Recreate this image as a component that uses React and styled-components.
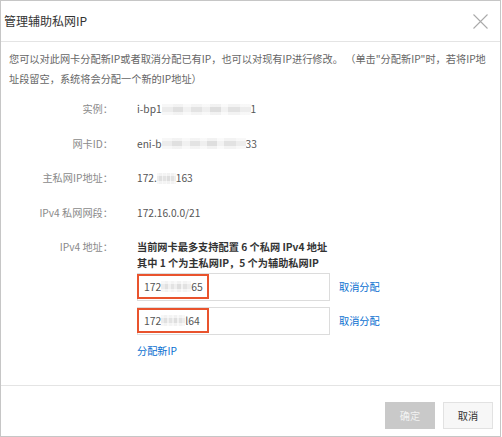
import React from 'react';
import styled, { createGlobalStyle } from 'styled-components';

const Global = createGlobalStyle`
  html, body { margin: 0; padding: 0; background: #fff; }
  body { font-family: "Noto Sans CJK SC", "Noto Sans", sans-serif; }
  * { box-sizing: border-box; }
`;

const Dialog = styled.div`
  width: 501px;
  height: 437px;
  border: 1px solid #c6c6c6;
  display: flex;
  flex-direction: column;
  background: #fff;
`;

const Header = styled.div`
  height: 41px;
  flex: none;
  border-bottom: 1px solid #e4e4e4;
  display: flex;
  align-items: center;
  justify-content: space-between;
  padding: 0 12px 0 3px;
`;

const Title = styled.h1`
  margin: 0;
  font-size: 12px;
  font-weight: normal;
  color: #333;
  line-height: 20px;
`;

const Close = styled.button`
  border: 0;
  background: none;
  padding: 0;
  width: 15px;
  height: 15px;
  display: flex;
  cursor: pointer;
`;

const Body = styled.div`
  flex: 1;
  padding: 7px 10px 0 8px;
  font-size: 10.2px;
`;

const Desc = styled.p`
  margin: 0;
  line-height: 20px;
  color: #666;
`;

const Form = styled.div`
  display: flex;
  flex-direction: column;
  gap: 14.5px;
  margin-top: 10px;
`;

const Row = styled.div`
  display: flex;
  align-items: flex-start;
  line-height: ${p => p.$lh || 20}px;
  margin-top: ${p => p.$mt || 0}px;
`;

const Label = styled.div`
  width: 104px;
  flex: none;
  text-align: right;
  color: #8a8a8a;
  margin-right: 24px;
`;

const Value = styled.div`
  color: #555;
  display: flex;
  align-items: center;
`;

const Stack = styled.div`
  display: flex;
  flex-direction: column;
`;

const Note = styled.div`
  font-weight: bold;
  color: #333;
  line-height: 16px;
`;

const IpList = styled.div`
  display: flex;
  flex-direction: column;
  gap: 6px;
  margin-top: 2px;
`;

const IpRow = styled.div`
  display: flex;
  align-items: center;
  gap: 9px;
`;

const IpInput = styled.div`
  position: relative;
  width: 193px;
  height: 28px;
  border: 1px solid #dcdcdc;
  padding-left: 6px;
  display: flex;
  align-items: center;
  color: #555;
  font-size: 10.4px;
`;

const Mark = styled.span`
  position: absolute;
  left: -1px;
  top: 0;
  width: 72px;
  height: 25px;
  border: 2px solid #e9532d;
`;

const Link = styled.a`
  color: #0a6fd0;
  text-decoration: none;
  cursor: pointer;
  line-height: 20px;
`;

const Smudge = styled.span`
  display: inline-block;
  width: ${p => p.$w}px;
  height: 11px;
  background:
    linear-gradient(180deg, rgba(255,255,255,0.6) 0 25%, rgba(255,255,255,0) 25% 75%, rgba(255,255,255,0.6) 75% 100%),
    linear-gradient(90deg, #ececec 0 12%, #e0e0e0 12% 24%, #f1f1f1 24% 33%, #e3e3e3 33% 45%, #efefef 45% 54%, #dedede 54% 66%, #f2f2f2 66% 74%, #e2e2e2 74% 88%, #ededed 88% 100%);
  filter: blur(0.6px);
`;

const Footer = styled.div`
  flex: none;
  border-top: 1px solid #e4e4e4;
  display: flex;
  justify-content: flex-end;
  gap: 8px;
  padding: 16px 7px 7px 0;
`;

const Button = styled.button`
  width: 50px;
  height: 27px;
  font-family: inherit;
  font-size: 10.2px;
  padding: 0;
  border: 1px solid ${p => (p.$primary ? '#c9c9c9' : '#e2e2e2')};
  background: ${p => (p.$primary ? '#c9c9c9' : '#f7f7f7')};
  color: ${p => (p.$primary ? '#f2f2f2' : '#333')};
  cursor: ${p => (p.$primary ? 'not-allowed' : 'pointer')};
`;

const CloseIcon = () => (
  <svg width="15" height="15" viewBox="0 0 15 15">
    <path d="M0.5 0.5 L14.5 14.5 M14.5 0.5 L0.5 14.5" stroke="#aaaaaa" strokeWidth="1.1" fill="none" />
  </svg>
);

const fields = [
  { label: '实例：', value: <>i-bp1<Smudge $w={89} />1</> },
  { label: '网卡ID：', value: <>eni-b<Smudge $w={84} />33</> },
  { label: '主私网IP地址：', value: <>172.<Smudge $w={19} />163</> },
  { label: 'IPv4 私网网段：', value: <>172.16.0.0/21</> },
];

const ips = [
  { head: '172', w: 30, tail: '65' },
  { head: '172', w: 24, tail: 'l64' },
];

export default function App() {
  return (
    <>
      <Global />
      <Dialog>
        <Header>
          <Title>管理辅助私网IP</Title>
          <Close aria-label="关闭"><CloseIcon /></Close>
        </Header>
        <Body>
          <Desc>
            您可以对此网卡分配新IP或者取消分配已有IP，也可以对现有IP进行修改。 （单击"分配新IP"时，若将IP地<br />址段留空，系统将会分配一个新的IP地址）
          </Desc>
          <Form>
            {fields.map(f => (
              <Row key={f.label}>
                <Label>{f.label}</Label>
                <Value>{f.value}</Value>
              </Row>
            ))}
            <Row $lh={16} $mt={1.5}>
              <Label>IPv4 地址：</Label>
              <Stack>
                <Note>当前网卡最多支持配置 6 个私网 IPv4 地址</Note>
                <Note>其中 1 个为主私网IP，5 个为辅助私网IP</Note>
                <IpList>
                  {ips.map((ip, i) => (
                    <IpRow key={i}>
                      <IpInput>
                        {ip.head}<Smudge $w={ip.w} />{ip.tail}
                        <Mark />
                      </IpInput>
                      <Link>取消分配</Link>
                    </IpRow>
                  ))}
                  <Link>分配新IP</Link>
                </IpList>
              </Stack>
            </Row>
          </Form>
        </Body>
        <Footer>
          <Button $primary disabled>确定</Button>
          <Button>取消</Button>
        </Footer>
      </Dialog>
    </>
  );
}
